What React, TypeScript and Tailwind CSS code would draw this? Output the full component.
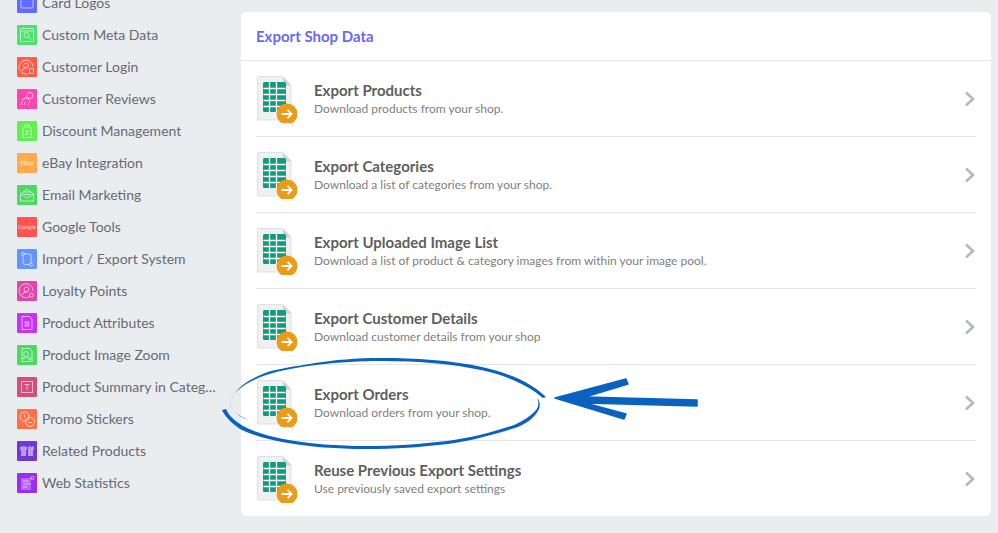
import type { ReactNode } from 'react'

type Plugin = { name: string; bg: string; glyph: ReactNode }

const line = { fill: 'none', stroke: 'currentColor', strokeWidth: 1 }

const plugins: Plugin[] = [
  { name: 'Card Logos', bg: 'bg-[#5f6cff]', glyph: <rect x="4" y="5" width="12" height="10" rx="1" {...line} /> },
  {
    name: 'Custom Meta Data',
    bg: 'bg-[#4fe06f]',
    glyph: (
      <g {...line}>
        <rect x="3.5" y="3.5" width="13" height="13" rx="1" />
        <path d="M3.5 6h13" />
        <circle cx="9.5" cy="10" r="2.5" />
        <path d="M11.5 12l2.5 2.5" />
      </g>
    ),
  },
  {
    name: 'Customer Login',
    bg: 'bg-[#ff5c4a]',
    glyph: (
      <g {...line}>
        <path d="M13.5 15.5a7 7 0 1 1 2.5-6" />
        <circle cx="9" cy="8.5" r="2.5" />
        <path d="M5 14c1-2 2.500-3 4-3" />
        <rect x="12.500" y="11.500" width="4" height="5" rx=".5" />
      </g>
    ),
  },
  {
    name: 'Customer Reviews',
    bg: 'bg-[#ff44ae]',
    glyph: (
      <g {...line}>
        <circle cx="13" cy="6.500" r="3" />
        <path d="M4 16l2-6 4-1 3 3-2 4M7 16l1-3M10 9l-2-2" />
      </g>
    ),
  },
  {
    name: 'Discount Management',
    bg: 'bg-[#62f050]',
    glyph: (
      <g {...line}>
        <path d="M6 6.500h8v10H6zM8 6.500V4h4v2.500" />
        <path d="M8.500 10h3l-3 3.500h3" />
      </g>
    ),
  },
  {
    name: 'eBay Integration',
    bg: 'bg-[#ffaa4d]',
    glyph: (
      <text x="10" y="12" textAnchor="middle" fontSize="6.500" fontWeight="700" fill="currentColor" fontFamily="Lato, sans-serif">
        ebay
      </text>
    ),
  },
  {
    name: 'Email Marketing',
    bg: 'bg-[#4fd764]',
    glyph: (
      <g {...line}>
        <path d="M3.500 9l6.500-5 6.500 5v7h-13z" />
        <path d="M3.500 9l6.500 4 6.500-4M6 7h8M6.500 9.500h7" />
      </g>
    ),
  },
  {
    name: 'Google Tools',
    bg: 'bg-[#ff5450]',
    glyph: (
      <text x="10" y="12" textAnchor="middle" fontSize="5.500" fontWeight="700" fill="currentColor" fontFamily="Lato, sans-serif">
        Google
      </text>
    ),
  },
  {
    name: 'Import / Export System',
    bg: 'bg-[#6494ff]',
    glyph: (
      <g {...line}>
        <circle cx="6" cy="5" r="1.500" />
        <circle cx="14" cy="15.500" r="1.500" />
        <path d="M7.500 5H12q2 0 2 2v7M6 6.500V13q0 2.500 2 2.500h4.500" />
      </g>
    ),
  },
  {
    name: 'Loyalty Points',
    bg: 'bg-[#e046a8]',
    glyph: (
      <g {...line}>
        <path d="M12.500 15.800a7 7 0 1 1 3.500-6" />
        <circle cx="9.500" cy="8.500" r="2.500" />
        <path d="M5 14c1-2 3-3 5-3" />
        <circle cx="14.500" cy="14" r="2" />
      </g>
    ),
  },
  {
    name: 'Product Attributes',
    bg: 'bg-[#c832f5]',
    glyph: (
      <g>
        <path d="M5 3.500h7.500l2.500 2.500v10.500H5z" {...line} />
        <rect x="7.500" y="8" width="5" height="6" fill="currentColor" opacity=".6" />
      </g>
    ),
  },
  {
    name: 'Product Image Zoom',
    bg: 'bg-[#4fd764]',
    glyph: (
      <g {...line}>
        <path d="M5 16.500V3.500h7.500L15 6v10.500z" />
        <circle cx="9" cy="9" r="2.500" />
        <circle cx="12.500" cy="13.500" r="1.500" />
        <path d="M5 14l5-2" />
      </g>
    ),
  },
  {
    name: 'Product Summary in Category Pages',
    bg: 'bg-[#d24f7c]',
    glyph: (
      <g {...line}>
        <rect x="4.500" y="4.500" width="11" height="11" />
        <path d="M7.500 7.500h5M10 7.500v5.500" />
      </g>
    ),
  },
  {
    name: 'Promo Stickers',
    bg: 'bg-[#ff7048]',
    glyph: (
      <g {...line}>
        <circle cx="7.500" cy="7.500" r="4.500" />
        <circle cx="13" cy="13" r="4.500" />
        <path d="M7.500 5.500v3M11 13l1 1 1-1 1 1 1-1" />
      </g>
    ),
  },
  {
    name: 'Related Products',
    bg: 'bg-[#7138d8]',
    glyph: (
      <g fill="currentColor" opacity=".85">
        <path d="M3 6l3-1 1 1 1-1 2 1v3H9v6H4V9H3z" />
        <path d="M11 6l1.500-1 1.500 1 1.500-1L17 6v3h-1v6h-5z" />
      </g>
    ),
  },
  {
    name: 'Web Statistics',
    bg: 'bg-[#9a2cf5]',
    glyph: (
      <g>
        <path d="M4 5h10v12H4z" fill="currentColor" opacity=".45" />
        <path d="M6 8h6M6 11h8M6 14h4" stroke="currentColor" strokeWidth="1.200" />
        <circle cx="15.500" cy="5" r="1.500" {...line} />
      </g>
    ),
  },
]

const exportsList = [
  ['Export Products', 'Download products from your shop.'],
  ['Export Categories', 'Download a list of categories from your shop.'],
  ['Export Uploaded Image List', 'Download a list of product & category images from within your image pool.'],
  ['Export Customer Details', 'Download customer details from your shop'],
  ['Export Orders', 'Download orders from your shop.'],
  ['Reuse Previous Export Settings', 'Use previously saved export settings'],
]

function PluginIcon({ plugin }: { plugin: Plugin }) {
  return (
    <span className={`flex h-5 w-5 flex-none rounded-[1px] text-white/60 ${plugin.bg}`}>
      <svg viewBox="0 0 20 20" className="h-5 w-5">
        {plugin.glyph}
      </svg>
    </span>
  )
}

function SheetIcon() {
  return (
    <svg viewBox="0 0 42 48" className="h-12 w-[42px] flex-none">
      <path d="M1.500 2.500a1 1 0 0 1 1-1H27L35 10v34a1 1 0 0 1-1 1H2.500a1 1 0 0 1-1-1z" fill="#eef0f1" stroke="#dfe1e3" />
      <path d="M27 1.500L35 10.500H27z" fill="#cfd2d5" />
      <rect x="7" y="7" width="23" height="30" rx="1.500" fill="#129a7d" />
      <path d="M7.500 13.500h22M7.500 19.500h22M7.500 25.500h22M7.500 31.500h22M13.500 7v30M20.500 7v30" stroke="#fff" strokeWidth="1.300" />
      <circle cx="31" cy="39" r="10.500" fill="#eb9b17" />
      <path d="M25.500 39h10M31.500 34.800l4.200 4.200-4.200 4.200" fill="none" stroke="#fff" strokeWidth="1.800" />
    </svg>
  )
}

function Scribbles() {
  return (
    <svg viewBox="0 0 998 533" className="pointer-events-none absolute left-0 top-0 h-[533px] w-[998px]">
      <path
        d="M546 397C530 381 505 372 482 367C450 360 415 358 382 358C355 358 335 360 315 363C292 367 276 369 265 373C250 379 240 386 235 393C230 400 229 405 232 409C236 414 242 418 248 420C240 416 233 412 231 407C229 401 233 395 237 391C246 383 255 379 266 375C282 370 298 367 316 365C340 362 360 361 382 361C420 361 452 364 481 370C505 375 528 385 543 398Z"
        fill="#0a62c0"
      />
      <path
        d="M222 410C226 418 233 424 240 429C252 435 267 439 282 442C310 447 338 449 365 449C395 449 422 447 448 444C472 441 495 434 515 428C526 424 534 418 538 411C541 406 540 401 537 398C539 402 539 406 536 410C531 416 523 421 514 425C494 432 471 438 447 441C421 444 394 446 365 446C338 446 311 444 283 439C268 436 254 432 243 426C235 421 229 416 226 409Z"
        fill="#0a62c0"
      />
      <path
        d="M555 398L626 379L628 384L585 397L697 400L697 406L585 403L626 414L624 419Z"
        fill="#0a62c0"
        stroke="#0a62c0"
        strokeWidth="1.500"
        strokeLinejoin="round"
      />
    </svg>
  )
}

export default function App() {
  return (
    <div className="relative flex h-[533px] w-[998px] overflow-hidden bg-[#eaedf0] font-['Lato','Liberation_Sans',sans-serif]">
      <div className="-mt-[13px] flex w-[241px] flex-none flex-col pl-[17px]">
        {plugins.map((p) => (
          <div key={p.name} className="flex h-8 items-center gap-[5px]">
            <PluginIcon plugin={p} />
            <span className="max-w-[175px] truncate text-sm text-[#666a73]">{p.name}</span>
          </div>
        ))}
      </div>

      <div className="mt-3 h-[504px] w-[750px] flex-none rounded-md bg-white">
        <div className="flex h-[49px] items-center border-b border-[#e3e5e7] pl-[15px]">
          <h2 className="text-[15px] font-bold text-[#6a67f5]">Export Shop Data</h2>
        </div>
        <div className="flex flex-col px-[15px]">
          {exportsList.map(([title, desc], i) => (
            <div
              key={title}
              className={`flex h-[76px] items-center ${i < exportsList.length - 1 ? 'border-b border-[#e3e5e7]' : ''}`}
            >
              <SheetIcon />
              <div className="ml-4 flex-1">
                <div className="text-[15px] font-bold leading-[19px] text-[#5e5e5e]">{title}</div>
                <div className="text-xs leading-[17px] text-[#808080]">{desc}</div>
              </div>
              <svg viewBox="0 0 12 16" className="mr-[0px] h-4 w-3 flex-none">
                <path d="M2 1.500L9 8l-7 6.500" fill="none" stroke="#b4b9bf" strokeWidth="2.600" />
              </svg>
            </div>
          ))}
        </div>
      </div>

      <Scribbles />
    </div>
  )
}
